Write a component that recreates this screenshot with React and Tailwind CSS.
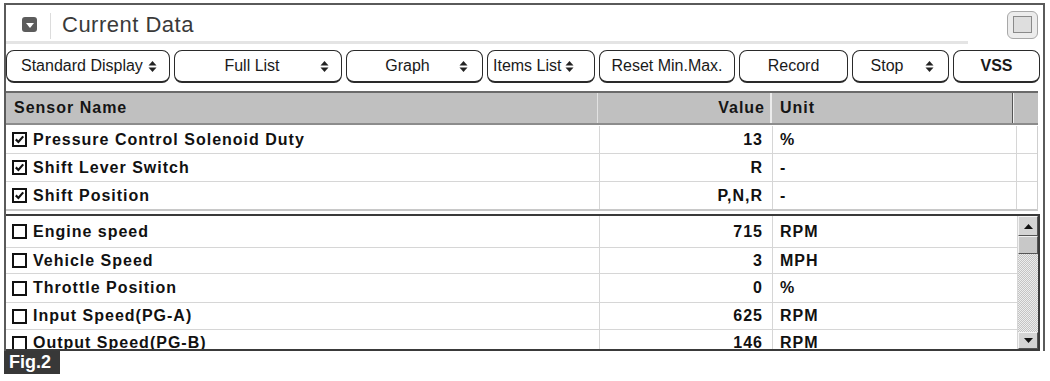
import React from "react";

const fixedRows = [
  { name: "Pressure Control Solenoid Duty", value: "13", unit: "%" },
  { name: "Shift Lever Switch", value: "R", unit: "-" },
  { name: "Shift Position", value: "P,N,R", unit: "-" },
];

const listRows = [
  { name: "Engine speed", value: "715", unit: "RPM", h: "h-[32px]" },
  { name: "Vehicle Speed", value: "3", unit: "MPH", h: "h-[26px]" },
  { name: "Throttle Position", value: "0", unit: "%", h: "h-[29px]" },
  { name: "Input Speed(PG-A)", value: "625", unit: "RPM", h: "h-[27px]" },
  { name: "Output Speed(PG-B)", value: "146", unit: "RPM", h: "h-[27px]" },
];

function UpDown() {
  return (
    <svg width="9" height="13" viewBox="0 0 9 13" className="shrink-0">
      <path d="M4.5 1 L8.5 5.5 H0.5 Z" fill="#222" />
      <path d="M4.5 12 L8.5 7.5 H0.5 Z" fill="#222" />
    </svg>
  );
}

function Check({ on }) {
  return (
    <span className="w-[15px] h-[15px] border-2 border-[#111] flex items-center justify-center shrink-0 bg-white">
      {on && (
        <svg width="11" height="11" viewBox="0 0 11 11">
          <path d="M1.8 5.4 L4.4 8 L9.2 2.4" stroke="#111" strokeWidth="2.2" fill="none" />
        </svg>
      )}
    </span>
  );
}

function Btn({ w, children, className = "" }) {
  return (
    <div
      className={`${w} h-[33px] shrink-0 flex items-center rounded-[8px] border-[1.5px] border-b-2 border-[#2a2a2a] bg-white text-[16px] text-[#1a1a1a] ${className}`}
    >
      {children}
    </div>
  );
}

function Row({ r, checked, h, last }) {
  return (
    <div className={`flex shrink-0 ${h} border-b border-[#d6d6d6] text-[16px] font-bold tracking-[1px] text-[#111]`}>
      <div className="w-[594px] shrink-0 flex items-center gap-[6px] pl-[6px] border-r border-[#d6d6d6] overflow-hidden whitespace-nowrap">
        <Check on={checked} />
        <span>{r.name}</span>
      </div>
      <div className="w-[173px] shrink-0 flex items-center justify-end pr-[9px] border-r border-[#d6d6d6]">
        {r.value}
      </div>
      <div className="flex-1 flex items-center pl-[7px]">{r.unit}</div>
      {!last && <div className="w-[21px] shrink-0 border-l border-[#d6d6d6]" />}
    </div>
  );
}

export default function App() {
  return (
    <div className="w-[1050px] h-[381px] bg-white overflow-hidden pt-[3px] pl-[4px] font-['Liberation_Sans',Arial,sans-serif]">
      <div className="w-[1041px] border-t-2 border-l-2 border-r-2 border-[#5a5a5a] flex flex-col">
        {/* title bar */}
        <div className="h-[36px] flex items-center">
          <div className="ml-[16px] w-[15px] h-[15px] rounded-[3px] bg-[#5c5c5c] flex items-center justify-center mt-[2px]">
            <svg width="8" height="5" viewBox="0 0 8 5" className="mt-[2px]">
              <path d="M0 0 H8 L4 5 Z" fill="#fff" />
            </svg>
          </div>
          <div className="ml-[13px] w-px h-[26px] bg-[#dcdcdc] mt-[6px]" />
          <span className="ml-[11px] text-[22px] tracking-[0.5px] text-[#3a3a3a] mt-[3px]">
            Current Data
          </span>
          <div className="ml-auto mr-[5px] w-[31px] h-[28px] rounded-[6px] border border-[#a8a8a8] bg-[#ececec] flex items-center justify-center mt-[3px]">
            <div className="w-[19px] h-[17px] border border-[#8a8a8a] bg-[#dedede]" />
          </div>
        </div>
        <div className="w-[962px] h-[3px] bg-[#e4e4e4]" />

        {/* toolbar */}
        <div className="flex gap-[4px] pt-[6px]">
          <Btn w="w-[164px]" className="pl-[14px] gap-[5px]">
            <span>Standard Display</span>
            <UpDown />
          </Btn>
          <Btn w="w-[168px]">
            <span className="flex-1" />
            <span>Full List</span>
            <span className="flex-1 flex justify-end pr-[12px]">
              <UpDown />
            </span>
          </Btn>
          <Btn w="w-[137px]">
            <span className="flex-1" />
            <span>Graph</span>
            <span className="flex-1 flex justify-end pr-[14px]">
              <UpDown />
            </span>
          </Btn>
          <Btn w="w-[108px]" className="pl-[5px] gap-[4px]">
            <span>Items List</span>
            <UpDown />
          </Btn>
          <Btn w="w-[136px]" className="justify-center">
            <span>Reset Min.Max.</span>
          </Btn>
          <Btn w="w-[109px]" className="justify-center">
            <span>Record</span>
          </Btn>
          <Btn w="w-[97px]" className="justify-center gap-[22px] pl-[4px]">
            <span>Stop</span>
            <UpDown />
          </Btn>
          <Btn w="w-[87px]" className="justify-center font-bold">
            <span>VSS</span>
          </Btn>
        </div>

        {/* table header */}
        <div className="mt-[8px] w-[1032px] flex h-[34px] border-t-2 border-b-2 border-t-[#6a6a6a] border-b-[#8c8c8c] bg-[#c0c0c0] text-[16px] font-bold tracking-[1px] text-[#151515]">
          <div className="w-[592px] shrink-0 flex items-center pl-[8px] border-r border-[#e2e2e2]">
            Sensor Name
          </div>
          <div className="w-[174px] shrink-0 flex items-center justify-end pr-[5px] border-r-2 border-[#ececec]">
            Value
          </div>
          <div className="w-[241px] shrink-0 flex items-center pl-[8px] border-r border-[#555]">
            Unit
          </div>
          <div className="flex-1 border-l border-[#f0f0f0]" />
        </div>

        {/* fixed rows */}
        <div className="w-[1032px] border-r border-[#cfcfcf] border-b-2 border-b-[#c8c8c8] mt-px">
          {fixedRows.map((r, i) => (
            <Row key={r.name} r={r} checked h={i === 2 ? "h-[27px] border-b-0" : "h-[28px]"} />
          ))}
        </div>

        {/* scroll list */}
        <div className="mt-[3px] w-[1034px] h-[137px] border-t-2 border-b-2 border-r-2 border-[#3a3a3a] flex overflow-hidden">
          <div className="flex-1 flex flex-col overflow-hidden">
            {listRows.map((r) => (
              <Row key={r.name} r={r} h={r.h} last />
            ))}
          </div>
          <div className="w-[21px] shrink-0 flex flex-col border-l border-[#d6d6d6]">
            <div className="h-[20px] shrink-0 bg-[#d4d4d4] border border-[#f4f4f4] border-r-[#555] border-b-[#555] flex items-center justify-center">
              <svg width="9" height="5" viewBox="0 0 9 5">
                <path d="M4.5 0 L9 5 H0 Z" fill="#111" />
              </svg>
            </div>
            <div className="h-[18px] shrink-0 bg-[#c8c8c8] border border-[#f0f0f0] border-r-[#555] border-b-[#555]" />
            <div className="flex-1 bg-[repeating-conic-gradient(#c4c4c4_0_25%,#ededed_0_50%)] bg-[length:2px_2px]" />
            <div className="h-[17px] shrink-0 bg-[#d4d4d4] border border-[#f4f4f4] border-r-[#555] border-b-[#555] flex items-center justify-center">
              <svg width="9" height="5" viewBox="0 0 9 5">
                <path d="M0 0 H9 L4.5 5 Z" fill="#111" />
              </svg>
            </div>
          </div>
        </div>
      </div>

      {/* figure label */}
      <div className="w-[56px] h-[23px] bg-[#383838] flex items-center pl-[5px] text-[18px] font-bold text-white">
        Fig.2
      </div>
    </div>
  );
}
